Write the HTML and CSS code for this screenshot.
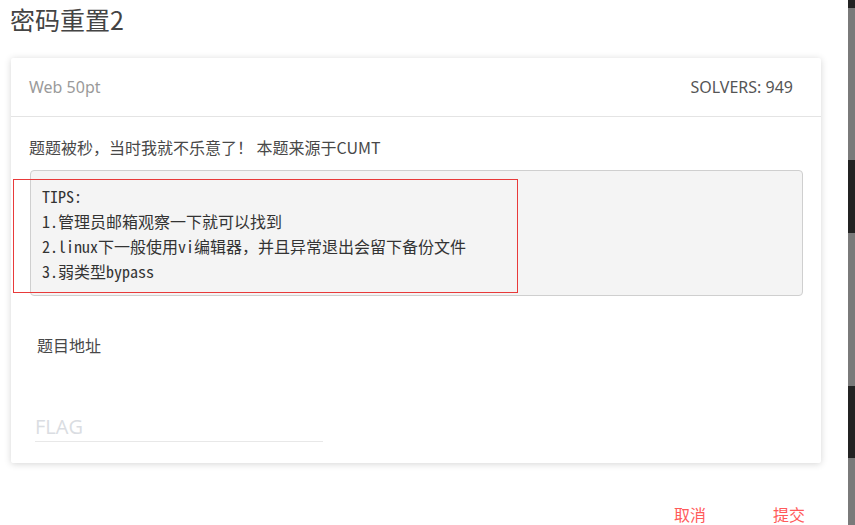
FILE: index.html
```html
<!DOCTYPE html>
<html lang="zh-CN">
<head>
<meta charset="utf-8">
<title>密码重置2</title>
<link rel="stylesheet" href="styles.css">
</head>
<body>
<div class="page">
  <div class="main">
    <h2 class="title">密码重置2</h2>
    <div class="card">
      <div class="card-header">
        <span class="category">Web 50pt</span>
        <span class="solvers">SOLVERS: 949</span>
      </div>
      <div class="card-body">
        <p class="desc">题题被秒，当时我就不乐意了！ 本题来源于CUMT</p>
        <div class="tips-wrap">
          <pre class="tips">TIPS:
1.管理员邮箱观察一下就可以找到
2.linux下一般使用vi编辑器，并且异常退出会留下备份文件
3.弱类型bypass</pre>
          <div class="highlight"></div>
        </div>
        <a class="link">题目地址</a>
        <input class="flag" type="text" placeholder="FLAG">
      </div>
    </div>
    <div class="actions">
      <button class="btn">取消</button>
      <button class="btn">提交</button>
    </div>
  </div>
  <div class="strip">
    <div class="band dark b1"></div>
    <div class="band gray b2"></div>
    <div class="band dark b3"></div>
    <div class="band gray b4"></div>
    <div class="band dark b5"></div>
    <div class="band gray b6"></div>
  </div>
</div>
</body>
</html>
```

FILE: styles.css
```css
html, body {
  margin: 0;
  padding: 0;
  background: #fff;
}
body {
  font-family: "Noto Sans CJK SC", "Noto Sans", sans-serif;
  color: #444;
  overflow: hidden;
}
.page {
  display: flex;
  height: 525px;
}
.main {
  width: 848px;
  flex: none;
}
.title {
  margin: 3px 0 0 10px;
  font-size: 25px;
  line-height: 32px;
  font-weight: 400;
  color: #444;
}
.card {
  margin: 23px 0 0 11px;
  width: 810px;
  background: #fff;
  border-radius: 2px;
  box-shadow: 0 1px 7px rgba(0, 0, 0, 0.17);
}
.card-header {
  height: 58px;
  border-bottom: 1px solid #e4e4e4;
  display: flex;
  align-items: center;
  justify-content: space-between;
  padding: 0 28px 0 18px;
  font-family: "Noto Sans", "Noto Sans CJK SC", sans-serif;
  font-size: 16px;
}
.category {
  color: #9a9a9a;
}
.solvers {
  color: #555;
}
.card-body {
  padding: 19px 18px 21px 18px;
}
.desc {
  margin: 0;
  font-size: 16px;
  line-height: 22px;
  color: #484848;
}
.tips-wrap {
  position: relative;
  margin: 12px 0 0 1px;
  width: 773px;
}
.tips {
  margin: 0;
  background: #f4f4f4;
  border: 1px solid #cfcfcf;
  border-radius: 4px;
  padding: 13px 11px 11px 11px;
  font-family: "Noto Sans Mono CJK SC", "Liberation Mono", monospace;
  font-size: 16px;
  line-height: 25px;
  color: #333;
}
.highlight {
  position: absolute;
  left: -17px;
  top: 9px;
  width: 503px;
  height: 112px;
  border: 1px solid #e83a3a;
}
.link {
  display: block;
  margin: 38px 0 0 8px;
  font-size: 16px;
  line-height: 22px;
  color: #484848;
}
.flag {
  display: block;
  margin: 55px 0 0 6px;
  width: 288px;
  height: 30px;
  padding: 0;
  border: none;
  border-bottom: 1px solid #e8e8e8;
  outline: none;
  font-family: "Open Sans", "Noto Sans", sans-serif;
  font-size: 20px;
  color: #333;
  background: transparent;
}
.flag::placeholder {
  color: #dadde2;
}
.actions {
  display: flex;
  justify-content: flex-end;
  gap: 67px;
  margin-top: 41px;
  padding-right: 43px;
}
.btn {
  border: none;
  background: none;
  padding: 0;
  font-family: "Noto Sans CJK SC", sans-serif;
  font-size: 16px;
  line-height: 20px;
  color: #ff5a5a;
  cursor: pointer;
}
.strip {
  width: 7px;
  flex: none;
  display: flex;
  flex-direction: column;
}
.band { flex: none; }
.dark { background: #232323; }
.gray { background: #7a7a7a; }
.b1 { height: 8px; }
.b2 { height: 152px; }
.b3 { height: 73px; }
.b4 { height: 153px; }
.b5 { height: 72px; }
.b6 { flex: 1; }
```
